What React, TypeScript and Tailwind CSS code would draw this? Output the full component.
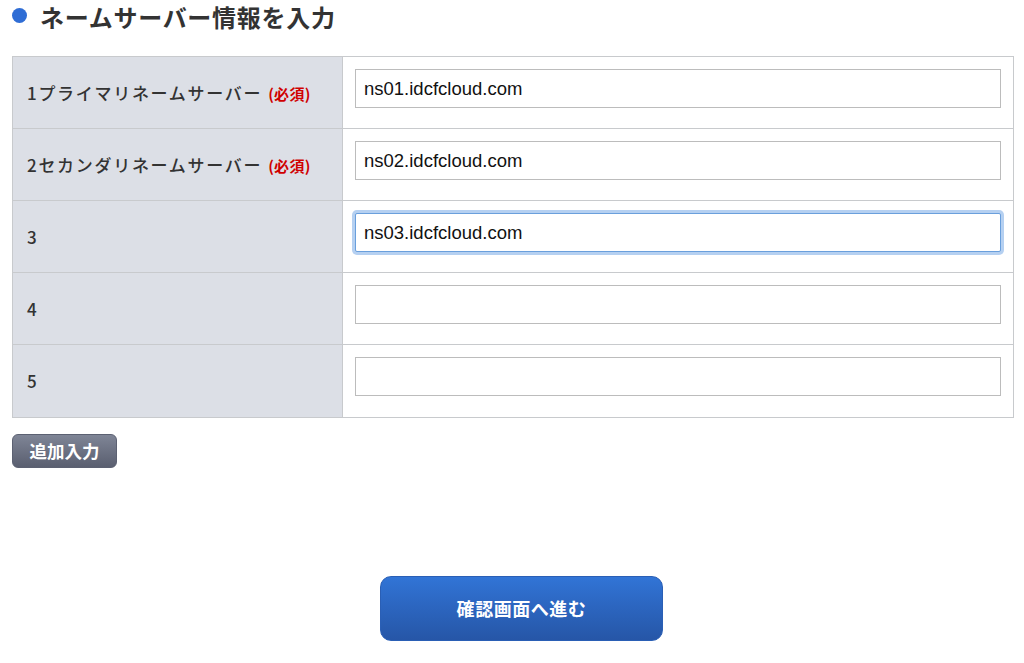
import React from "react";

const rows = [
  { label: "1プライマリネームサーバー", required: true, value: "ns01.idcfcloud.com", focus: false },
  { label: "2セカンダリネームサーバー", required: true, value: "ns02.idcfcloud.com", focus: false },
  { label: "3", required: false, value: "ns03.idcfcloud.com", focus: true },
  { label: "4", required: false, value: "", focus: false },
  { label: "5", required: false, value: "", focus: false },
];

const jp = { fontFamily: '"Noto Sans CJK JP", "Noto Sans", sans-serif' };

export default function App() {
  return (
    <div className="w-[1024px] h-[663px] bg-white overflow-hidden" style={jp}>
      <div className="flex items-center h-[34px] pl-[12px]">
        <span className="w-[15px] h-[15px] rounded-full bg-[#2f6dd5] mr-[13px] -mt-[4px]" />
        <h1 className="text-[24px] font-bold text-[#333] leading-[30px] tracking-[0.03em]">ネームサーバー情報を入力</h1>
      </div>
      <div className="px-[12px] pt-[22px]">
        <table className="w-[1002px] border-collapse border border-[#c8cacd]">
          <tbody>
            {rows.map((r, i) => (
              <tr key={i} className={i === 4 ? "h-[73px]" : "h-[72px]"}>
                <td className="w-[330px] bg-[#dcdfe6] border border-[#c8cacd] pl-[14px] text-[17px] font-medium text-[#333] tracking-[0.1em] align-middle">
                  <span>{r.label}</span>
                  {r.required && (
                    <span className="ml-[6px] text-[15px] font-bold text-[#d00000] tracking-[0.02em]">(必須)</span>
                  )}
                </td>
                <td className="border border-[#c8cacd] px-[12px] align-top pt-[12px]">
                  <div
                    className={
                      r.focus
                        ? "h-[39px] border border-[#6a9fdc] shadow-[0_0_0_3px_rgba(120,170,230,0.55)] rounded-[2px] flex items-center pl-[8px] bg-white"
                        : "h-[39px] border border-[#bcbcbc] flex items-center pl-[8px] bg-white"
                    }
                  >
                    <span className="text-[18.5px] text-[#111]" style={{ fontFamily: '"Liberation Sans", Arial, sans-serif' }}>
                      {r.value}
                    </span>
                  </div>
                </td>
              </tr>
            ))}
          </tbody>
        </table>
        <button className="mt-[16px] h-[34px] w-[105px] rounded-[6px] bg-gradient-to-b from-[#7f8596] to-[#5a5f70] text-white font-bold text-[17.5px] flex items-center justify-center border border-[#5c6172]">
          追加入力
        </button>
      </div>
      <div className="flex justify-center mt-[108px] pl-[19px]">
        <button className="w-[283px] h-[65px] rounded-[11px] bg-gradient-to-b from-[#3174d6] to-[#2656a7] text-white font-bold text-[18px] tracking-[0.03em] flex items-center justify-center border border-[#2a5fb5]">
          確認画面へ進む
        </button>
      </div>
    </div>
  );
}
